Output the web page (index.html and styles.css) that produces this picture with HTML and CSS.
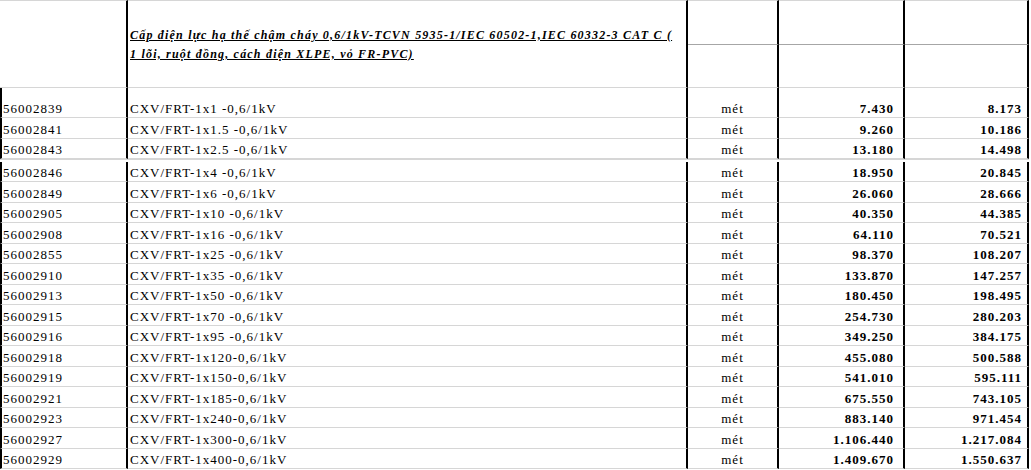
FILE: index.html
```html
<!DOCTYPE html>
<html lang="vi">
<head>
<meta charset="utf-8">
<title>Bảng giá cáp CXV/FRT</title>
<link rel="stylesheet" href="styles.css">
</head>
<body>
<table class="sheet sheet-top">
  <colgroup><col class="c1"><col class="c2"><col class="c3"><col class="c4"><col class="c5"></colgroup>
  <thead>
    <tr class="h1">
      <th class="hcode" rowspan="2"></th>
      <th class="htitle" rowspan="2"><span class="title">Cấp điện lực hạ thế chậm cháy 0,6/1kV-TCVN 5935-1/IEC 60502-1,IEC 60332-3 CAT C (<br>1 lõi, ruột đồng, cách điện XLPE, vỏ FR-PVC)</span></th>
      <th class="hsub"></th><th class="hsub"></th><th class="hsub"></th>
    </tr>
    <tr class="h2"><th></th><th></th><th></th></tr>
  </thead>
  <tbody>
    <tr class="r-tall"><td class="code">56002839</td><td class="name">CXV/FRT-1x1 -0,6/1kV</td><td class="unit">mét</td><td class="num">7.430</td><td class="num last">8.173</td></tr>
    <tr class="r21"><td class="code">56002841</td><td class="name">CXV/FRT-1x1.5 -0,6/1kV</td><td class="unit">mét</td><td class="num">9.260</td><td class="num last">10.186</td></tr>
    <tr class="r20"><td class="code">56002843</td><td class="name">CXV/FRT-1x2.5 -0,6/1kV</td><td class="unit">mét</td><td class="num">13.180</td><td class="num last">14.498</td></tr>
  </tbody>
</table>
<div class="page-break"></div>
<table class="sheet sheet-bottom">
  <colgroup><col class="c1"><col class="c2"><col class="c3"><col class="c4"><col class="c5"></colgroup>
  <tbody>
    <tr class="r20"><td class="code">56002846</td><td class="name">CXV/FRT-1x4 -0,6/1kV</td><td class="unit">mét</td><td class="num">18.950</td><td class="num last">20.845</td></tr>
    <tr><td class="code">56002849</td><td class="name">CXV/FRT-1x6 -0,6/1kV</td><td class="unit">mét</td><td class="num">26.060</td><td class="num last">28.666</td></tr>
    <tr><td class="code">56002905</td><td class="name">CXV/FRT-1x10 -0,6/1kV</td><td class="unit">mét</td><td class="num">40.350</td><td class="num last">44.385</td></tr>
    <tr><td class="code">56002908</td><td class="name">CXV/FRT-1x16 -0,6/1kV</td><td class="unit">mét</td><td class="num">64.110</td><td class="num last">70.521</td></tr>
    <tr><td class="code">56002855</td><td class="name">CXV/FRT-1x25 -0,6/1kV</td><td class="unit">mét</td><td class="num">98.370</td><td class="num last">108.207</td></tr>
    <tr><td class="code">56002910</td><td class="name">CXV/FRT-1x35 -0,6/1kV</td><td class="unit">mét</td><td class="num">133.870</td><td class="num last">147.257</td></tr>
    <tr><td class="code">56002913</td><td class="name">CXV/FRT-1x50 -0,6/1kV</td><td class="unit">mét</td><td class="num">180.450</td><td class="num last">198.495</td></tr>
    <tr><td class="code">56002915</td><td class="name">CXV/FRT-1x70 -0,6/1kV</td><td class="unit">mét</td><td class="num">254.730</td><td class="num last">280.203</td></tr>
    <tr><td class="code">56002916</td><td class="name">CXV/FRT-1x95 -0,6/1kV</td><td class="unit">mét</td><td class="num">349.250</td><td class="num last">384.175</td></tr>
    <tr><td class="code">56002918</td><td class="name">CXV/FRT-1x120-0,6/1kV</td><td class="unit">mét</td><td class="num">455.080</td><td class="num last">500.588</td></tr>
    <tr><td class="code">56002919</td><td class="name">CXV/FRT-1x150-0,6/1kV</td><td class="unit">mét</td><td class="num">541.010</td><td class="num last">595.111</td></tr>
    <tr><td class="code">56002921</td><td class="name">CXV/FRT-1x185-0,6/1kV</td><td class="unit">mét</td><td class="num">675.550</td><td class="num last">743.105</td></tr>
    <tr><td class="code">56002923</td><td class="name">CXV/FRT-1x240-0,6/1kV</td><td class="unit">mét</td><td class="num">883.140</td><td class="num last">971.454</td></tr>
    <tr><td class="code">56002927</td><td class="name">CXV/FRT-1x300-0,6/1kV</td><td class="unit">mét</td><td class="num">1.106.440</td><td class="num last">1.217.084</td></tr>
    <tr><td class="code">56002929</td><td class="name">CXV/FRT-1x400-0,6/1kV</td><td class="unit">mét</td><td class="num">1.409.670</td><td class="num last">1.550.637</td></tr>
  </tbody>
</table>
</body>
</html>
```
FILE: styles.css
```css
html, body {
  margin: 0;
  padding: 0;
  background: #fff;
  overflow: hidden;
}

body {
  font-family: "Liberation Serif", "Times New Roman", serif;
  color: #000;
}

.sheet {
  border-collapse: separate;
  border-spacing: 0;
  table-layout: fixed;
  width: 1029px;
  font-size: 13px;
  letter-spacing: 1px;
}

.c1 { width: 128px; }
.c2 { width: 560px; }
.c3 { width: 91px; }
.c4 { width: 126px; }
.c5 { width: 124px; }

.sheet th,
.sheet td {
  box-sizing: border-box;
  padding: 0;
  border-right: 2px solid #000;
  border-bottom: 1px solid #d6d6d6;
  vertical-align: bottom;
  line-height: 15px;
  white-space: nowrap;
  overflow: hidden;
  font-weight: normal;
}

/* header */
.sheet .h1 th {
  border-top: 1px solid #d6d6d6;
  height: 45px;
}

.sheet .h1 .hsub {
  border-bottom-color: #a6a6a6;
}

.sheet .h2 th {
  height: 43px;
}

.sheet .htitle {
  vertical-align: middle;
  text-align: left;
  padding-left: 2px;
  padding-top: 2px;
}

.title {
  font-size: 12px;
  line-height: 19px;
  font-weight: bold;
  font-style: italic;
  text-decoration: underline;
  letter-spacing: 1.2px;
}

/* body rows */
.sheet .r-tall td { height: 30px; }
.sheet .r21 td { height: 21px; }
.sheet .r20 td { height: 20px; }
.sheet-bottom tr td { height: 20.5px; }
.sheet-bottom tr.r20 td { height: 20px; }

.sheet td { padding-bottom: 1px; }

.sheet .code {
  border-left: 2px solid #000;
  padding-left: 1px;
  text-align: left;
}

.sheet .name {
  padding-left: 2px;
  text-align: left;
}

.sheet .unit {
  text-align: center;
}

.sheet .num {
  text-align: right;
  font-weight: bold;
  padding-right: 9px;
}

.sheet .num.last {
  padding-right: 5px;
}

.page-break {
  height: 3px;
  box-sizing: border-box;
  border-top: 1px solid #d6d6d6;
  width: 1029px;
}
```
